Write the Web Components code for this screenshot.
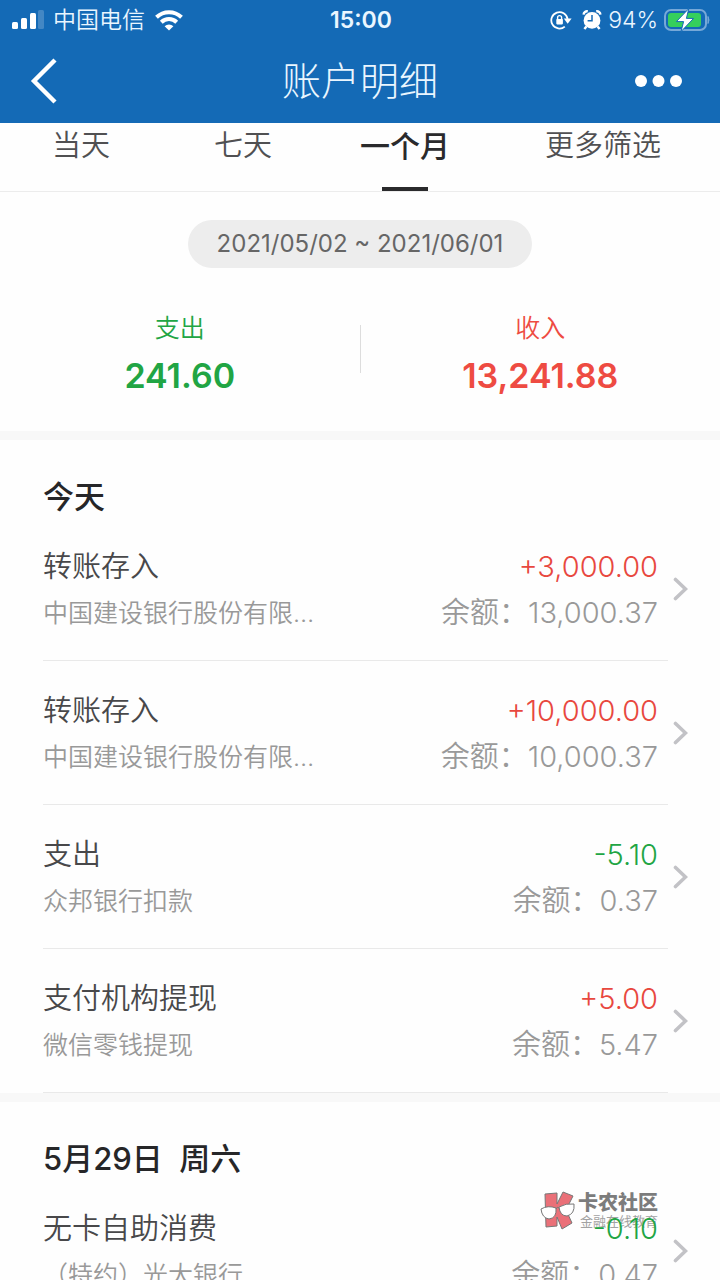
<!DOCTYPE html>
<html lang="zh-CN">
<head>
<meta charset="utf-8">
<meta name="viewport" content="width=device-width, initial-scale=1">
<title>账户明细</title>
<style>
    html, body {
        margin: 0;
        height: 100%;
    }
    body {
        background-color: #fefefe;
        font-family: Inter, "Noto Sans CJK SC", sans-serif;
        color: #48484a;
    }
</style>
</head>
<body>
<account-page></account-page>

<script>
function makeTemplate(html) {
    const t = document.createElement("template");
    t.innerHTML = html;
    return t;
}

class BaseElement extends HTMLElement {
    constructor() {
        super();
        this.attachShadow({mode:"open"});
        this.shadowRoot.appendChild(this.constructor.template.content.cloneNode(true));
    }
}

class StatusBar extends BaseElement {
    static template = makeTemplate(`
    <style>
        :host {
            display: grid;
            grid-template-columns: 1fr auto 1fr;
            align-items: center;
            height: 40px;
            padding: 0 10px 0 12px;
            color: #eaf6ff;
            font-size: 23px;
            line-height: 40px;
        }
        .side {
            display: flex;
            align-items: center;
            gap: 9px;
        }
        .end {
            justify-content: flex-end;
            gap: 6px;
        }
        .time {
            font-weight: 600;
        }
        .carrier, .level {
            font-weight: 350;
        }
        svg {
            display: block;
            flex: none;
        }
        .lock {
            margin-right: 4px;
        }
    </style>
    <div class="side">
        <svg width="32" height="20" viewBox="0 0 32 20" fill="#fff">
            <rect x="0" y="12" width="6" height="7" rx="1.5"/>
            <rect x="9" y="8" width="6" height="11" rx="1.5"/>
            <rect x="18" y="3" width="6" height="16" rx="1.5"/>
            <rect x="26" y="0" width="6" height="19" rx="1.5" opacity=".2"/>
        </svg>
        <span class="carrier">中国电信</span>
        <svg width="30" height="22" viewBox="0 0 30 22" fill="none" stroke="#fff" stroke-width="4">
            <path d="M2.5 8.2 A18 18 0 0 1 27.5 8.2"/>
            <path d="M7.3 13.2 A11 11 0 0 1 22.7 13.2"/>
            <path d="M15 21.5 L10.6 17.2 A6.4 6.4 0 0 1 19.4 17.2 Z" fill="#fff" stroke="none"/>
        </svg>
    </div>
    <span class="time">15:00</span>
    <div class="side end">
        <svg class="lock" width="22" height="20" viewBox="0 0 22 20">
            <path d="M14.8 16.6 A8.2 8.2 0 1 1 17.6 9" fill="none" stroke="#fff" stroke-width="1.8"/>
            <path d="M13.8 8.6 H21.6 L17.7 13.8 Z" fill="#fff"/>
            <rect x="6.3" y="9" width="6.6" height="5.4" rx=".8" fill="#fff"/>
            <path d="M7.6 9.4 V7.6 A2 2 0 0 1 11.6 7.6 V9.4" fill="none" stroke="#fff" stroke-width="1.4"/>
        </svg>
        <svg width="20" height="20" viewBox="0 0 20 20">
            <circle cx="10" cy="10.4" r="8.4" fill="#fff"/>
            <path d="M1.6 4.6 A3.4 3.4 0 0 1 5.8 1.4 M14.2 1.4 A3.4 3.4 0 0 1 18.4 4.6 M4.4 16.4 L2.4 19 M15.6 16.4 L17.6 19" fill="none" stroke="#fff" stroke-width="2.4"/>
            <path d="M10 5 V10.8 H5.6" fill="none" stroke="#146ab6" stroke-width="1.5"/>
        </svg>
        <span class="level">94%</span>
        <svg width="46" height="24" viewBox="0 0 46 24">
            <rect x="1" y="2" width="41" height="20" rx="6" fill="none" stroke="#76a8d8" stroke-width="2"/>
            <path d="M44 8.5 Q46 12 44 15.5 Z" fill="#76a8d8" stroke="#76a8d8"/>
            <rect x="4" y="5" width="33" height="14" rx="3" fill="#35cf5c"/>
            <path d="M24.8 .6 L12.4 13.6 H19.6 L17 23.6 L29.6 10.4 H22.4 Z" fill="#fff" stroke="#146ab6" stroke-width="1"/>
        </svg>
    </div>`);
}

class NavHeader extends BaseElement {
    static template = makeTemplate(`
    <style>
        :host {
            display: grid;
            grid-template-columns: 1fr auto 1fr;
            align-items: center;
            height: 83px;
            padding: 0 30px 2px;
            box-sizing: border-box;
            color: #eaf6ff;
        }
        h1 {
            margin: 0;
            font-size: 39px;
            font-weight: 300;
            line-height: 78px;
        }
        button {
            display: block;
            border: none;
            background: none;
            padding: 0;
        }
        .more {
            justify-self: end;
            padding-right: 8px;
        }
        svg {
            display: block;
        }
    </style>
    <button class="back" aria-label="返回">
        <svg width="28" height="46" viewBox="0 0 28 46">
            <path d="M25 2 L4 23 L25 44" fill="none" stroke="#fff" stroke-width="4.4"/>
        </svg>
    </button>
    <h1><slot></slot></h1>
    <button class="more" aria-label="更多">
        <svg width="47" height="12" viewBox="0 0 47 12" fill="#fff">
            <circle cx="6" cy="6" r="6"/>
            <circle cx="23.5" cy="6" r="6"/>
            <circle cx="41" cy="6" r="6"/>
        </svg>
    </button>`);
}

class RangeTabs extends BaseElement {
    static template = makeTemplate(`
    <style>
        :host {
            display: block;
            border-bottom: 1px solid #ececec;
        }
        .tabs {
            display: grid;
            grid-template-columns: 9fr 9fr 9fr 13fr;
        }
        button {
            display: flex;
            flex-direction: column;
            justify-content: space-between;
            align-items: center;
            height: 68px;
            border: none;
            background: none;
            padding: 0;
            font: inherit;
            font-size: 29px;
            font-weight: 350;
            line-height: 46px;
            color: #505052;
        }
        button[aria-selected="true"] {
            font-size: 30px;
            font-weight: 500;
            color: #2a2a2c;
        }
        button[aria-selected="true"]::after {
            content: "";
            width: 46px;
            height: 4px;
            background-color: #2a2a2c;
        }
    </style>
    <div class="tabs" role="tablist">
        <button role="tab">当天</button>
        <button role="tab">七天</button>
        <button role="tab" aria-selected="true">一个月</button>
        <button role="tab">更多筛选</button>
    </div>`);

    connectedCallback() {
        const tabs = this.shadowRoot.querySelectorAll("button");
        tabs.forEach(tab => {
            tab.onclick = () => {
                tabs.forEach(t => t.setAttribute("aria-selected", t === tab));
            };
        });
    }
}

class AccountSummary extends BaseElement {
    static template = makeTemplate(`
    <style>
        :host {
            display: block;
            padding: 28px 0 32px;
            border-bottom: 9px solid #f8f8f8;
        }
        .range {
            display: block;
            margin: 0 auto;
            padding: 0 29px;
            border: none;
            border-radius: 24px;
            background-color: #ededed;
            font: inherit;
            font-size: 24px;
            line-height: 48px;
            color: #666;
        }
        .totals {
            display: grid;
            grid-template-columns: 1fr 1px 1fr;
            align-items: center;
            margin-top: 35px;
        }
        .line {
            height: 48px;
            margin-bottom: 4px;
            background-color: #ddd;
        }
        dl {
            margin: 0;
            text-align: center;
        }
        dt {
            font-size: 25px;
            font-weight: 350;
            line-height: 50px;
        }
        dd {
            margin: 0;
            font-size: 34px;
            font-weight: 600;
            line-height: 46px;
        }
        .out { color: #21a544; }
        .in { color: #ee4b42; }
    </style>
    <button class="range"><slot name="range"></slot></button>
    <div class="totals">
        <dl class="out"><dt>支出</dt><dd><slot name="out"></slot></dd></dl>
        <div class="line"></div>
        <dl class="in"><dt>收入</dt><dd><slot name="in"></slot></dd></dl>
    </div>`);
}

class DayGroup extends BaseElement {
    static template = makeTemplate(`
    <style>
        :host {
            display: block;
            border-bottom: 9px solid #f8f8f8;
        }
        h2 {
            margin: 0;
            padding: 37px 43px 0;
            font-size: 31px;
            font-weight: 500;
            line-height: 40px;
            white-space: pre;
            color: #262628;
        }
    </style>
    <h2><slot name="day"></slot></h2>
    <slot></slot>`);
}

class LedgerRow extends BaseElement {
    static template = makeTemplate(`
    <style>
        :host {
            display: block;
        }
        a {
            display: flex;
            align-items: center;
            padding-left: 43px;
            color: inherit;
            text-decoration: none;
        }
        .body {
            flex: 1;
            min-width: 0;
            display: grid;
            grid-template-columns: 1fr auto;
            grid-auto-rows: 46px;
            padding: 27px 10px 24px 0;
            border-bottom: 1px solid #e9e9e9;
            font-size: 29px;
            font-weight: 350;
            line-height: 46px;
            white-space: nowrap;
        }
        .note {
            font-size: 25px;
            color: #999;
        }
        .amount, .balance {
            text-align: right;
        }
        .balance {
            color: #999;
        }
        .amount { color: #e8483f; }
        :host([type="out"]) .amount { color: #21a544; }
        svg {
            flex: none;
            margin: 0 32px 0 5px;
        }
    </style>
    <a href="#">
        <div class="body">
            <span class="title"><slot></slot></span>
            <span class="amount"><slot name="amount"></slot></span>
            <span class="note"><slot name="note"></slot></span>
            <span class="balance">余额：<slot name="balance"></slot></span>
        </div>
        <svg width="15" height="26" viewBox="0 0 15 26">
            <path d="M2.5 3.5 L12.5 13 L2.5 22.5" fill="none" stroke="#c2c2c6" stroke-width="3.6" stroke-linecap="round"/>
        </svg>
    </a>`);
}

class BrandMark extends BaseElement {
    static template = makeTemplate(`
    <style>
        :host {
            display: flex;
            gap: 2px;
            color: #7c7c7c;
        }
        .name {
            font-size: 20px;
            font-weight: 900;
            line-height: 24px;
        }
        .slogan {
            padding-left: 2px;
            font-size: 13px;
            line-height: 12px;
            color: #a2a2a2;
        }
    </style>
    <svg width="36" height="39" viewBox="0 0 36 39">
        <path d="M5 3 L17 2 L17 13 L23 1 L33 5 L26 19 L32 32 L22 38 L17 26 L17 35 L6 36 Z" fill="#ea7078" stroke="#777" stroke-linejoin="round"/>
        <g fill="#fff" stroke="#777">
            <path d="M1 18 Q8 14 16 17 Q17 27 9 28 Q2 27 1 18 Z"/>
            <path d="M19 16 Q26 12 34 13 Q35 23 27 25 Q20 25 19 16 Z"/>
            <path d="M16 18 Q17 15 19 17" fill="none"/>
        </g>
    </svg>
    <div>
        <div class="name">卡农社区</div>
        <div class="slogan">金融在线教育</div>
    </div>`);
}

class AccountPage extends BaseElement {
    static template = makeTemplate(`
    <style>
        :host {
            display: flex;
            flex-direction: column;
            height: 100vh;
            position: relative;
            overflow: hidden;
        }
        header {
            flex: none;
            background-color: #146ab6;
        }
        main {
            flex: 1;
            min-height: 0;
            position: relative;
            z-index: 1;
            overflow-y: auto;
            scrollbar-width: none;
        }
        brand-mark {
            position: absolute;
            right: 62px;
            bottom: 50px;
        }
    </style>
    <header>
        <status-bar></status-bar>
        <nav-header>账户明细</nav-header>
    </header>
    <main>
        <range-tabs></range-tabs>
        <account-summary>
            <span slot="range">2021/05/02 ~ 2021/06/01</span>
            <span slot="out">241.60</span>
            <span slot="in">13,241.88</span>
        </account-summary>
        <day-group>
            <span slot="day">今天</span>
            <ledger-row type="in">转账存入
                <span slot="amount">+3,000.00</span>
                <span slot="note">中国建设银行股份有限…</span>
                <span slot="balance">13,000.37</span>
            </ledger-row>
            <ledger-row type="in">转账存入
                <span slot="amount">+10,000.00</span>
                <span slot="note">中国建设银行股份有限…</span>
                <span slot="balance">10,000.37</span>
            </ledger-row>
            <ledger-row type="out">支出
                <span slot="amount">-5.10</span>
                <span slot="note">众邦银行扣款</span>
                <span slot="balance">0.37</span>
            </ledger-row>
            <ledger-row type="in">支付机构提现
                <span slot="amount">+5.00</span>
                <span slot="note">微信零钱提现</span>
                <span slot="balance">5.47</span>
            </ledger-row>
        </day-group>
        <day-group>
            <span slot="day">5月29日  周六</span>
            <ledger-row type="out">无卡自助消费
                <span slot="amount">-0.10</span>
                <span slot="note">（特约）光大银行</span>
                <span slot="balance">0.47</span>
            </ledger-row>
        </day-group>
    </main>
    <brand-mark></brand-mark>`);
}

customElements.define("status-bar", StatusBar);
customElements.define("nav-header", NavHeader);
customElements.define("range-tabs", RangeTabs);
customElements.define("account-summary", AccountSummary);
customElements.define("ledger-row", LedgerRow);
customElements.define("day-group", DayGroup);
customElements.define("brand-mark", BrandMark);
customElements.define("account-page", AccountPage);
</script>
</body>
</html>
